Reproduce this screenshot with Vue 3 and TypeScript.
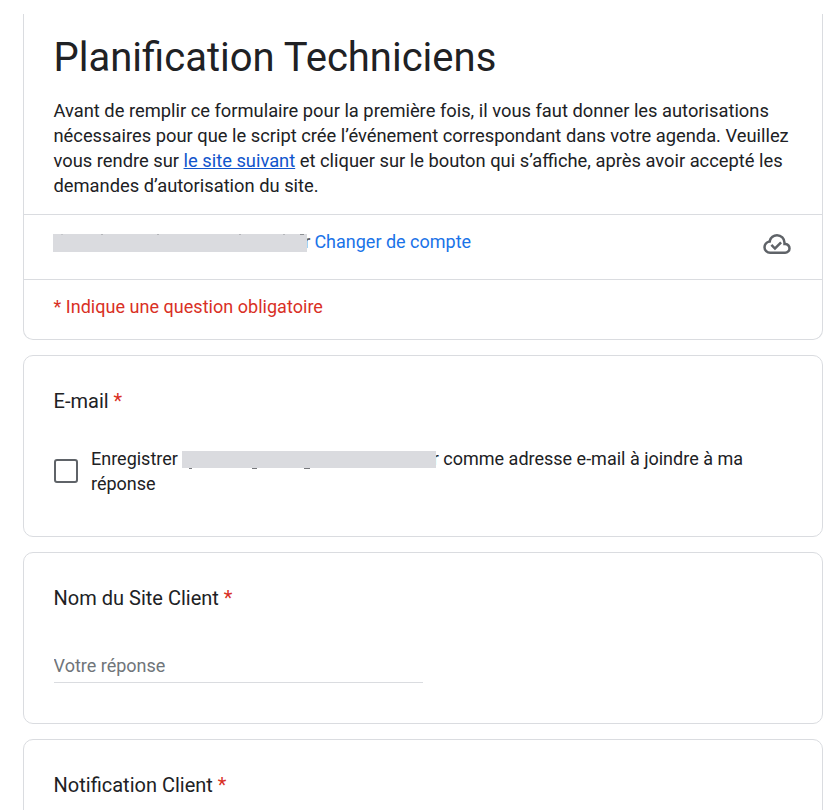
<script setup lang="ts">
import { ref } from 'vue'

const saveEmail = ref(false)
const clientSite = ref('')
</script>

<template>
  <main class="form">
    <section class="card header">
      <div class="intro">
        <h1>Planification Techniciens</h1>
        <p>
          Avant de remplir ce formulaire pour la première fois, il vous faut donner les autorisations<br />
          nécessaires pour que le script crée l’événement correspondant dans votre agenda. Veuillez<br />
          vous rendre sur <a class="site" href="#">le site suivant</a> et cliquer sur le bouton qui s’affiche, après avoir accepté les<br />
          demandes d’autorisation du site.
        </p>
      </div>
      <div class="account">
        <div class="identity">
          <span class="mask"></span><span class="tail">r</span>
          <a class="switch" href="#">Changer de compte</a>
        </div>
        <svg class="cloud" viewBox="0 -960 960 960" aria-hidden="true">
          <path d="M260-160q-91 0-155.5-63T40-377q0-78 47-139t123-78q25-92 100-149t170-57q117 0 198.5 81.5T760-520q69 8 114.5 59.5T920-340q0 75-52.5 127.5T740-160H260Zm0-80h480q42 0 71-29t29-71q0-42-29-71t-71-29h-60v-80q0-83-58.5-141.5T480-720q-83 0-141.5 58.5T280-520h-20q-58 0-99 41t-41 99q0 58 41 99t99 41Z" />
          <path d="m414-280 226-226-58-58-169 169-84-84-57 57 142 142Z" />
        </svg>
      </div>
      <div class="notice">* Indique une question obligatoire</div>
    </section>

    <section class="card email">
      <h2>E-mail <span class="star">*</span></h2>
      <label class="choice">
        <input v-model="saveEmail" type="checkbox" />
        <span class="choice-text">
          <span class="first">Enregistrer <span class="mask"></span><span class="tail">r</span> comme adresse e-mail à joindre à ma</span>
          <span>réponse</span>
        </span>
      </label>
    </section>

    <section class="card site-name">
      <h2>Nom du Site Client <span class="star">*</span></h2>
      <input v-model="clientSite" class="answer" type="text" placeholder="Votre réponse" />
    </section>

    <section class="card notification">
      <h2>Notification Client <span class="star">*</span></h2>
    </section>
  </main>
</template>

<style>
body {
  background: #fff;
  overflow: hidden;
}
</style>

<style scoped>
.form {
  box-sizing: border-box;
  width: 840px;
  height: 810px;
  padding: 14px 17px 0 23px;
  overflow: hidden;
  display: flex;
  flex-direction: column;
  gap: 15px;
  font-family: Roboto, "Liberation Sans", sans-serif;
  font-size: 18px;
  line-height: 25px;
  color: #202124;
}
.card {
  box-sizing: border-box;
  flex: none;
  border: 1px solid #dadce0;
  border-radius: 10px;
  background: #fff;
}
.header {
  height: 326px;
  border-top: 0;
  border-radius: 0 0 10px 10px;
}
.intro {
  box-sizing: border-box;
  height: 200px;
  padding: 19px 0 0 29.5px;
}
h1 {
  margin: 0;
  font-size: 40px;
  font-weight: 400;
  line-height: 50px;
}
p {
  margin: 15px 0 0;
  font-size: 18.32px;
  white-space: nowrap;
}
.site {
  color: #1155cc;
}
.account {
  box-sizing: border-box;
  height: 65px;
  border-top: 1px solid #dadce0;
  padding: 14px 30px 0 29px;
  display: flex;
  justify-content: space-between;
}
.identity {
  display: flex;
  white-space: nowrap;
}
.mask {
  display: inline-block;
  position: relative;
  width: 254px;
  height: 18px;
  background: #dadbdf;
}
.identity .mask {
  margin-top: 5px;
}
.identity .mask::before {
  content: "";
  position: absolute;
  top: 0;
  left: 8px;
  width: 2px;
  height: 1px;
  background: #c4c6ca;
  box-shadow: 40px 0 #b4b6ba, 96px 0 #b4b6ba, 178px 0 #b4b6ba, 222px 0 #b4b6ba, 239px 0 #8d9094, 241px 0 #8d9094;
}
.tail {
  margin-left: -3px;
}
.identity .tail {
  color: #5f6368;
  font-weight: 500;
}
.switch {
  margin-left: 4px;
  color: #1a73e8;
  text-decoration: none;
}
.cloud {
  width: 30px;
  height: 30px;
  fill: #5f6368;
}
.notice {
  border-top: 1px solid #dadce0;
  padding: 14px 0 0 29.5px;
  letter-spacing: 0.03px;
  color: #d93025;
}
h2 {
  margin: 0;
  font-size: 20px;
  font-weight: 400;
  line-height: 30px;
}
.star {
  color: #d93025;
}
.email,
.site-name,
.notification {
  padding: 30px 30px 0 29.6px;
}
.email {
  height: 182px;
}
.site-name {
  height: 172px;
}
.notification {
  height: 172px;
}
.choice {
  display: flex;
  align-items: center;
  gap: 13.4px;
  margin-top: 30px;
}
.choice input {
  appearance: none;
  box-sizing: border-box;
  width: 24px;
  height: 24px;
  margin: 0;
  border: 2px solid #5f6368;
  border-radius: 3px;
}
.choice-text {
  display: flex;
  flex-direction: column;
}
.first {
  display: flex;
  white-space: pre;
}
.first .mask {
  height: 17px;
  margin-top: 5px;
  z-index: 1;
}
.first .mask::after {
  content: "";
  position: absolute;
  top: 17px;
  left: 7px;
  width: 3px;
  height: 1px;
  background: #77797d;
  box-shadow: 63px 0 #77797d, 65px 0 #77797d, 115px 0 #77797d, 118px 0 #77797d;
}
.first .tail {
  margin-left: -3.6px;
}
.answer {
  display: block;
  box-sizing: border-box;
  width: 369px;
  height: 31px;
  margin-top: 39px;
  padding: 1px 0 4px;
  border: 0;
  border-bottom: 1px solid #dadce0;
  outline: 0;
  font: inherit;
  color: inherit;
}
.answer::placeholder {
  color: #70757a;
  opacity: 1;
}
</style>
